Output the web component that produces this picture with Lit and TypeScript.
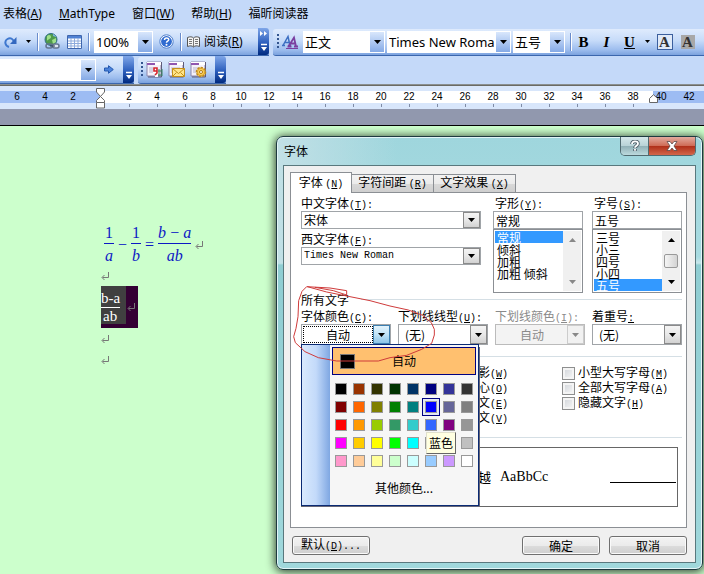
import { LitElement, html, css, svg } from "lit";
import { customElement, property } from "lit/decorators.js";
import { classMap } from "lit/directives/class-map.js";

const key = (k: string, tail = "") => html`<span class="k">(<u>${k}</u>)${tail}</span>`;

const caret = html`<svg class="caret" width="7" height="4" viewBox="0 0 7 4" aria-hidden="true"><path d="M0 0h7L3.5 4z" /></svg>`;

const returnMark = html`<svg class="ret" width="8" height="8" viewBox="0 0 8 8" aria-hidden="true">
  <path d="M7.5 0v5.500H1.500M3.500 3L1 5.500L3.500 8" fill="none" stroke="currentColor" />
</svg>`;

const base = css`
  :host, * { box-sizing: border-box; }
  button, select, input { font: inherit; color: inherit; margin: 0; padding: 0; border: 0; border-radius: 0; background: none; }
  select { appearance: none; outline: none; }
  svg { display: block; flex: none; }
`;

@customElement("word-toolbars")
class WordToolbars extends LitElement {
  static styles = [base, css`
    :host { display: block; background: #c4d9f9; color: #000; font: 12px/16px "Noto Sans", "Noto Sans CJK SC", sans-serif; }
    .menu { display: flex; gap: 17px; height: 28px; align-items: center; padding-left: 3px; }
    .menu button { white-space: nowrap; }
    .row { display: flex; gap: 4px; height: 28px; align-items: center; overflow: hidden; }
    .bar { display: flex; align-items: center; height: 27px; flex: none; background: linear-gradient(#dfebfd, #c6dbf9 45%, #9dbdee 80%, #7ba2de); border-bottom: 1px solid #3b66ad; }
    .b1 { width: 269px; }
    .b2 { flex: 1 0 430px; padding-left: 4px; border-radius: 3px 0 0 3px; }
    .b3 { width: 134px; }
    .b4 { width: 88px; padding-left: 3px; border-radius: 3px 0 0 3px; }
    .bar button { display: grid; place-items: center; width: 22px; height: 22px; flex: none; }
    .bar .mini { width: 12px; }
    .bar .read { display: flex; gap: 4px; width: auto; padding: 0 3px; align-items: center; white-space: nowrap; }
    .sep { width: 2px; height: 18px; margin: 0 2px 0 3px; background: linear-gradient(90deg, #6a8ccb 50%, #fff 50%); flex: none; }
    .b2 .sep { margin-right: 0; }
    .bar .cap { width: 11px; height: 27px; margin-left: auto; border-radius: 0 3px 3px 0; background: linear-gradient(#7fa6e8, #2d5fbd 55%, #002a80); color: #fff; align-content: end; padding-bottom: 3px; }
    .combo { display: grid; grid-template-columns: 1fr 14px; align-items: center; height: 22px; background: #fff; border: 1px solid #fff; flex: none; margin-right: 2px; font-size: 13px; }
    .combo select { grid-area: 1 / 1 / 2 / 3; height: 20px; width: 100%; padding: 0 15px 0 1px; text-overflow: clip; }
    .combo i { grid-area: 1 / 2; height: 20px; display: grid; place-items: center; background: linear-gradient(#d9e7fc, #85aae6); pointer-events: none; }
    .zoom { width: 59px; margin-left: 2px; }
    .style { width: 82px; margin-left: 2px; }
    .face { width: 124px; }
    .size { width: 52px; }
    .addr { width: 96px; }
    .grip { width: 2px; height: 15px; background: repeating-linear-gradient(#33558f 0 2px, transparent 2px 4px); flex: none; }
    .bar .fmt { width: 23px; font: bold 15px/16px "Liberation Serif", serif; }
    .boxed { width: 16px; border: 1px solid #3b5f9e; line-height: 14px; color: #333; background: #dfe9f8; }
    .shaded { width: 14px; background: #a8a8a8; color: #333; line-height: 14px; }
    .line { height: 2px; background: linear-gradient(#8a8f8f 50%, #6a6a64 50%); }
    .ruler { position: relative; height: 23px; padding-top: 5px; background: #d8e6fb; overflow: hidden; }
    .scale { display: flex; height: 12px; padding-left: 3px; background: linear-gradient(90deg, #9dbcf3 100px, #fff 100px 653px, #9dbcf3 653px); font: 10px/12px "Liberation Sans", sans-serif; }
    .scale span { flex: none; width: 28px; text-align: center; }
    .scale .tick::after { content: ""; display: block; width: 1px; height: 3px; margin: 1px auto 0; background: #7f8ba5; }
    .mark { position: absolute; top: 2px; left: 96px; }
    .right { position: absolute; top: 8px; left: 649px; }
  `];

  private combo(cls: string, label: string, value: string) {
    return html`<div class="combo ${cls}"><select aria-label=${label}><option>${value}</option></select><i>${caret}</i></div>`;
  }

  private cap(more = false) {
    return html`<button class="cap" aria-label="工具栏选项"><svg width="8" height="23" viewBox="0 0 8 23">
      ${more ? svg`<path d="M0 2l3 2.500l-3 2.500zM4 2l3 2.500l-3 2.500z" fill="#fff"/>` : ""}
      <path d="M1 15.500h6" stroke="#fff" stroke-width="1.500"/><path d="M1 18h6l-3 4z" fill="#fff"/></svg></button>`;
  }

  private mailIcon(kind: number) {
    return html`<svg width="17" height="17" viewBox="0 0 17 17">
      <path d="M1 1h14v14H1z" fill="#f4f1fa" stroke="#8c86ac"/><path d="M1 1h14v3H1z" fill="#fff"/><path d="M1 2h8v2H1z" fill="#9057b0"/>
      <path d="M3 7h9M3 9h9M3 11h6" stroke="#b9b4cc"/><path d="M15.500 1v15H2" fill="none" stroke="#5f5a78"/>
      ${kind === 0 ? svg`<path d="M7 6h5v10H9v-4H7z" fill="#fff"/><path d="M8 7h3v3H8zM11 7v5l-2 2" fill="none" stroke="#d3262f" stroke-width="1.600"/><path d="M13 8v7M16 8v7M12 10h4M12 14h4" stroke="#3c8262"/>` : ""}
      ${kind === 1 ? svg`<path d="M4.500 7.500h12v8h-12z" fill="#ffe58a" stroke="#c4901a"/><path d="M4.500 7.500l6 5l6-5M4.500 15.500l4-4M16.500 15.500l-4-4" fill="none" stroke="#c4901a"/>` : ""}
      ${kind === 2 ? svg`<circle cx="11" cy="11" r="4.500" fill="#ffd257" stroke="#c08a1c" stroke-width="1.500" stroke-dasharray="2.200 1.200"/><circle cx="11" cy="11" r="3.600" fill="#ffd257" stroke="#c08a1c" stroke-width=".6"/><circle cx="11" cy="11" r="1.500" fill="#fff" stroke="#b07a10"/>` : ""}
    </svg>`;
  }

  render() {
    const marks = [6, 4, 2, 0, ...Array.from({ length: 21 }, (_, i) => (i + 1) * 2)];
    return html`
      <nav class="menu">
        <button>表格(<u>A</u>)</button><button><u>M</u>athType</button><button>窗口(<u>W</u>)</button>
        <button>帮助(<u>H</u>)</button><button>福昕阅读器</button>
      </nav>
      <div class="row">
        <div class="bar b1">
          <button class="redo" aria-label="重复"><svg width="14" height="12" viewBox="0 0 14 12"><path d="M5 11C1 10 0 5 3.500 3S9 3.500 10 5.500" fill="none" stroke="#3f78cf" stroke-width="2"/><path d="M12.500 1v7H6z" fill="#3468bf"/></svg></button>
          <button class="mini" aria-label="重复列表"><svg width="5" height="3" viewBox="0 0 5 3"><path d="M0 0h5L2.500 3z"/></svg></button>
          <span class="sep"></span>
          <button aria-label="超链接"><svg width="16" height="17" viewBox="0 0 16 17"><circle cx="7" cy="6.500" r="6" fill="#4f9b4a" stroke="#2f6f86"/><path d="M3 3c2-2 4-1 4 1s-3 2-4 4zM8 7l4-2v4l-3 2z" fill="#9fe08a"/><path d="M9 1c2 1 3 2 3 3l-3-1z" fill="#79b3e2"/><g fill="none" stroke="#63758f" stroke-width="1.500"><rect x="2" y="11" width="6.500" height="4" rx="2"/><rect x="8.500" y="11" width="6.500" height="4" rx="2" fill="#dfe7f2"/></g><path d="M6 13h5" stroke="#2c3c55"/></svg></button>
          <button aria-label="插入表格"><svg width="15" height="14" viewBox="0 0 15 14"><path d="M.5.500h14v13H.5z" fill="#fff" stroke="#3f66ad"/><path d="M1 1h13v2.500H1z" fill="#4f81d4"/><path d="M4 3v10M7.500 3v10M11 3v10M1 6h13M1 8.500h13M1 11h13" stroke="#8eabdc"/></svg></button>
          <span class="sep"></span>
          ${this.combo("zoom", "显示比例", "100%")}
          <button aria-label="帮助"><svg width="15" height="15" viewBox="0 0 15 15"><circle cx="7.500" cy="7.500" r="6.700" fill="#fff" stroke="#4f7fcb"/><circle cx="7.500" cy="7.500" r="5.400" fill="#2f6bd0"/><path d="M5.500 6c0-2.800 4.200-2.600 4.200-.3c0 1.500-2.200 1.500-2.200 3" fill="none" stroke="#fff" stroke-width="1.500"/><circle cx="7.500" cy="10.800" r="1" fill="#fff"/></svg></button>
          <span class="sep"></span>
          <button class="read"><svg width="13" height="12" viewBox="0 0 13 12"><path d="M.5 1.500C3 .5 5 .5 6.500 2C8 .5 10 .5 12.500 1.500v9C10 9.500 8 9.500 6.500 11C5 9.500 3 9.500.5 10.500z" fill="#f5f5f5" stroke="#555"/><path d="M6.500 2v9M2 3.500h3M2 5.500h3M2 7.500h3M8 3.500h3M8 5.500h3M8 7.500h3" stroke="#777"/></svg><span>阅读(<u>R</u>)</span></button>
          ${this.cap(true)}
        </div>
        <div class="bar b2">
          <span class="grip"></span>
          <button aria-label="格式窗格"><svg width="16" height="15" viewBox="0 0 16 15"><g fill="none"><path d="M1 11.500L6 2.500L8 11.500M3 8.500h4.500M0 11.500h3M6 11.500h3" stroke="#3c6fc2" stroke-width="1.500"/><path d="M6.500 12.500L12 3.500L14 12.500M8.500 9.500h5M5.500 12.500h4M12 12.500h4" stroke="#7b3fa0" stroke-width="1.800"/><path d="M4 14.500h12" stroke="#7b3fa0"/></g></svg></button>
          ${this.combo("style", "样式", "正文")}${this.combo("face", "字体", "Times New Roman")}${this.combo("size", "字号", "五号")}
          <span class="sep"></span>
          <button class="fmt">B</button><button class="fmt"><i>I</i></button><button class="fmt"><u>U</u></button>
          <button class="mini" aria-label="下划线列表"><svg width="5" height="3" viewBox="0 0 5 3"><path d="M0 0h5L2.500 3z"/></svg></button>
          <button class="fmt"><span class="boxed">A</span></button><button class="fmt"><span class="shaded">A</span></button>
          <button aria-label="字符缩放"><svg width="14" height="14" viewBox="0 0 14 14"><path d="M2 3.500l3-3l3 3l-3 3z" fill="#2a67c8"/><path d="M3 13l9-9" stroke="#222" stroke-width="2"/></svg></button>
        </div>
      </div>
      <div class="row">
        <div class="bar b3">
          ${this.combo("addr", "地址", "")}
          <button aria-label="转到"><svg width="10" height="9" viewBox="0 0 10 9"><path d="M.5 3h4V.7L9.300 4.500L4.500 8.300V6h-4z" fill="#4b83dc" stroke="#2458ae"/></svg></button>
          ${this.cap()}
        </div>
        <div class="bar b4">
          <span class="grip"></span>
          <button aria-label="文档">${this.mailIcon(0)}</button><button aria-label="邮件">${this.mailIcon(1)}</button><button aria-label="设置">${this.mailIcon(2)}</button>
          ${this.cap()}
        </div>
      </div>
      <div class="line"></div>
      <div class="ruler">
        <div class="scale">${marks.map((n, i) => html`<span class=${classMap({ tick: i > 3 && n < 40 })}>${n || ""}</span>`)}</div>
        <svg class="mark" width="9" height="21" viewBox="0 0 9 21"><g fill="#fff" stroke="#666"><path d="M.5.500h8v3.500L4.500 8.500L.5 4z"/><path d="M4.500 8.500L8.500 12.500v2h-8v-2z"/><path d="M.5 14.500h8v5.500h-8z"/></g></svg>
        <svg class="right" width="9" height="9" viewBox="0 0 9 9"><path d="M4.500.7L8.500 4.500v4h-8v-4z" fill="#fff" stroke="#666"/></svg>
      </div>`;
  }
}

@customElement("math-page")
class MathPage extends LitElement {
  static styles = [base, css`
    :host { display: block; padding: 98px 0 0 101px; font: 16px/18px "Liberation Serif", serif; }
    .eq { display: flex; align-items: center; gap: 4px; padding-left: 3px; height: 41px; color: #0d18c4; }
    .f { display: grid; justify-items: center; font-style: italic; }
    .f b { font-weight: normal; }
    .f b:first-child { border-bottom: 1px solid currentColor; width: 100%; text-align: center; height: 20px; }
    .f b:last-child { padding-top: 3px; }
    .f .n { font-style: normal; padding: 0 1px; }
    .ret { color: #777; }
    .para { display: flex; align-items: center; height: 21px; }
    .sel { display: flex; align-items: center; width: 37px; height: 42px; background: #303; }
    .box { display: grid; justify-items: start; align-self: start; width: 25px; height: 38px; padding-top: 4px; background: #404040; color: #fff; font-size: 15px; line-height: 17px; margin-right: 1px; }
    .box b { font-weight: normal; }
    .box b:first-child { border-bottom: 1px solid #fff; height: 18px; }
    .box b:last-child { padding-left: 2px; line-height: 15px; }
  `];
  render() {
    return html`
      <div class="eq">
        <span class="f"><b class="n">1</b><b>a</b></span><span>−</span>
        <span class="f"><b class="n">1</b><b>b</b></span><span>=</span>
        <span class="f"><b>b&thinsp;−&thinsp;a</b><b>ab</b></span>${returnMark}
      </div>
      <div class="para">${returnMark}</div>
      <div class="sel"><span class="box"><b>b-a</b><b>ab</b></span>${returnMark}</div>
      <div class="para">${returnMark}</div>
      <div class="para">${returnMark}</div>`;
  }
}

const COLORS = [
  ["#000000", "#993300", "#333300", "#003300", "#003366", "#000080", "#333399", "#333333"],
  ["#800000", "#ff6600", "#808000", "#008000", "#008080", "#0000ff", "#666699", "#808080"],
  ["#ff0000", "#ff9900", "#99cc00", "#339966", "#33cccc", "#3366ff", "#800080", "#969696"],
  ["#ff00ff", "#ffcc00", "#ffff00", "#00ff00", "#00ffff", "#00ccff", "#993366", "#c0c0c0"],
  ["#ff99cc", "#ffcc99", "#ffff99", "#ccffcc", "#ccffff", "#99ccff", "#cc99ff", "#ffffff"],
];

@customElement("color-menu")
class ColorMenu extends LitElement {
  @property() selected = "#0000ff";
  static styles = [base, css`
    :host { display: block; width: 178px; padding: 2px 2px 1px 28px; border: 1px solid #0a2a74; font: 12px/16px "Noto Sans CJK SC", sans-serif; background: linear-gradient(90deg, #d9e9fd, #c3dafa 14px, #7fa7e2 28px, #f6f6f6 28px); box-shadow: 2px 2px 0 -1px #667; }
    .auto { display: grid; grid-template-columns: 15px 1fr 15px; align-items: center; width: 144px; height: 28px; margin-left: 2px; padding: 0 7px; border: 1px solid #000080; background: #ffc06f; }
    .auto i { height: 15px; background: #000; border: 1px solid #777; }
    .grid { display: grid; grid-template-columns: repeat(8, 18px); grid-auto-rows: 18px; margin: 5px 0 0 2px; }
    .grid button { position: relative; display: grid; place-items: center; border: 1px solid transparent; }
    .grid .on { border-color: #000080; background: #e4e8f4; }
    .grid i { width: 12px; height: 12px; border: 1px solid #999; }
    .tip { position: absolute; z-index: 1; left: 3px; top: 33px; width: 30px; height: 22px; line-height: 19px; border: 1px solid #e0e0cc; border-right-color: #666; border-bottom-color: #666; background: #ffffe1; white-space: nowrap; text-align: center; }
    .more { display: block; width: 144px; height: 32px; margin: 2px 0 0 2px; }
  `];
  render() {
    return html`
      <button class="auto"><i></i><span>自动</span></button>
      <div class="grid">${COLORS.flat().map((c) => html`
        <button class=${classMap({ on: c === this.selected })} aria-label=${c}><i style="background:${c}"></i>${c === this.selected ? html`<span class="tip" role="tooltip">蓝色</span>` : ""}</button>`)}</div>
      <button class="more">其他颜色...</button>`;
  }
}

@customElement("font-dialog")
class FontDialog extends LitElement {
  static styles = [base, css`
    :host { display: block; width: 427px; padding: 0 6px 6px; border: 1px solid #1e3a40; border-radius: 7px; color: #000; font: 12px/14px "Noto Sans CJK SC", sans-serif;
      background: linear-gradient(90deg, #c2e0e6 0, transparent 120px) top / 100% 126px no-repeat, linear-gradient(#9fd6dd, #a8dbe1 120px, #c8e6ea 126px, #8fcdd2 128px, #a0d8dc);
      box-shadow: inset 0 0 0 1px #e2f5f7, 0 1px 10px 1px rgba(0, 0, 0, .75); }
    .k { font: 10px/14px "Liberation Mono", monospace; }
    .title { display: flex; align-items: center; height: 28px; }
    .title h1 { flex: 1; margin: 0; padding-left: 1px; font: inherit; }
    .win { display: flex; align-self: start; height: 19px; border: 1px solid #506a70; border-top: 0; border-radius: 0 0 5px 5px; overflow: hidden; }
    .win button { display: grid; place-items: center; width: 27px; background: linear-gradient(#d5e8ea, #b9d3d7 48%, #91b1b7 52%, #bcdade); }
    .win .x { width: 47px; border-left: 1px solid #506a70; background: linear-gradient(#e3aa9e, #cf6c57 48%, #b0301a 52%, #d3664a); }
    .client { padding: 6px 8px 7px 6px; border: 1px solid #59787d; background: #f0f0f0; }
    .tabs { display: flex; align-items: end; height: 20px; }
    .tabs button { width: 82px; height: 18px; border: 1px solid #8b8f94; border-left-width: 0; border-bottom: 0; background: linear-gradient(#f3f3f3, #ebebeb 50%, #d8d8d8 55%, #cfcfcf); }
    .tabs .on { width: 62px; height: 21px; margin-bottom: -1px; border-left-width: 1px; background: #fff; }
    .pane { padding: 0 4px 20px 10px; border: 1px solid #8b8f94; background: #fff; }
    .top { display: grid; grid-template-columns: 1fr 90px 90px; column-gap: 9px; }
    .top > :first-child { margin-right: 3px; }
    .four { display: grid; grid-template-columns: repeat(4, 90px); justify-content: space-between; }
    label, .field { display: block; position: relative; }
    .cap { display: block; height: 18px; line-height: 19px; white-space: nowrap; }
    .top > :not(:first-child) .cap { padding-left: 2px; }
    .drop { display: grid; grid-template-columns: 1fr 17px; align-items: center; height: 18px; border: 1px solid #a0a4a8; background: #fff; }
    .drop select { grid-area: 1 / 1 / 2 / 3; width: 100%; height: 100%; padding: 0 19px 0 2px; }
    .drop i { grid-area: 1 / 2; display: grid; place-items: center; align-self: stretch; border: 1px solid #8a8a8a; background: linear-gradient(#f4f4f4, #e8e8e8 50%, #d2d2d2); pointer-events: none; }
    .four .drop { height: 21px; }
    .mono select { font: 10px/14px "Liberation Mono", monospace; }
    .mid select { padding-left: 24px; }
    .none select { padding-left: 6px; }
    .hot select { outline: 1px dotted #000; outline-offset: -2px; padding-left: 24px; width: calc(100% - 16px); }
    .hot i { background: linear-gradient(#e3f3fc, #bfe3f8 50%, #8cc5e8); border-color: #3c7fb1; }
    .off { color: #8a8a8a; }
    .off .drop { background: #f3f3f3; border-color: #bbb; }
    .off select { opacity: 1; color: #8a8a8a; }
    .off i { border-color: #ccc; background: #f1f1f1; }
    .off .caret, .dim .caret { fill: #888; }
    .text { display: block; width: 100%; height: 18px; padding: 0 2px; border: 1px solid #a0a4a8; }
    .list { display: grid; grid-template-columns: 1fr 18px; height: 64px; padding: 1px; border: 1px solid #8b8f94; background: #fff; }
    .list select { overflow: hidden; height: 60px; outline: none; scrollbar-width: none; }
    .list option { display: grid; align-content: center; height: 12px; min-height: 12px; line-height: 12px; padding: 0 2px; }
    .list option:checked { color: #fff; background: #3399ff linear-gradient(#3399ff, #3399ff); }
    .scroll { display: flex; flex-direction: column; justify-content: space-between; align-items: center; padding: 7px 0; background: #f0f0f0; }
    .scroll .thumb { width: 14px; height: 14px; border: 1px solid #999; border-radius: 2px; background: linear-gradient(90deg, #f5f5f5, #d3d3d3); }
    .up { transform: rotate(180deg); }
    .legend { display: flex; align-items: center; gap: 12px; height: 13px; }
    .legend::after { content: ""; flex: 1; height: 1px; background: #d5dfe5; }
    .rule { height: 1px; margin: 11px 0 9px; background: #d5dfe5; }
    .checks { display: grid; grid-template: repeat(4, 15px) / 112px auto; grid-auto-flow: column; padding-left: 149px; }
    .checks label { display: flex; align-items: center; gap: 3px; white-space: nowrap; }
    .checks input { appearance: none; width: 13px; height: 13px; border: 1px solid #8e8f8f; background: linear-gradient(135deg, #cfd3d8, #f8f8f8); box-shadow: inset 0 0 0 2px #f4f4f4; }
    .preview { display: flex; align-items: center; gap: 9px; height: 60px; margin-right: 4px; padding: 0 1px 0 133px; border: 1px solid #666; font-size: 14px; }
    .latin { font-family: "Liberation Serif", serif; }
    .preview::after { content: ""; width: 66px; height: 1px; margin: 10px 0 0 auto; background: #000; }
    .foot { display: flex; gap: 9px; padding: 8px 0 0 2px; }
    .foot button { width: 78px; height: 19px; border: 1px solid #707070; border-radius: 3px; background: linear-gradient(#f3f3f3, #ebebeb 50%, #dcdcdc 52%, #cfcfcf); box-shadow: inset 0 0 0 1px #fafafa; }
    .foot button:first-child { margin-right: auto; }
    color-menu { position: absolute; z-index: 2; left: 0; top: 38px; }
    .ink { position: absolute; z-index: 3; left: 13px; top: 143px; pointer-events: none; }
  `];

  private drop(cls: string, value: string, disabled = false) {
    return html`<span class="drop ${cls}"><select ?disabled=${disabled}><option>${value}</option></select><i>${caret}</i></span>`;
  }

  private list(label: string, items: string[], sel: string, thumb: boolean) {
    return html`<div class="list"><select size="5" aria-label=${label}>${items.map((o) => html`<option ?selected=${o === sel}>${o}</option>`)}</select>
      <div class=${classMap({ scroll: true, dim: !thumb })}><span class="up">${caret}</span>${thumb ? html`<span class="thumb"></span>` : ""}${caret}</div></div>`;
  }

  render() {
    const checks = [["阴影", "W"], ["空心", "O"], ["阳文", "E"], ["阴文", "V"], ["小型大写字母", "M"], ["全部大写字母", "A"], ["隐藏文字", "H"]];
    return html`
      <header class="title"><h1>字体</h1>
        <div class="win">
          <button aria-label="帮助"><svg width="10" height="12" viewBox="0 0 10 12"><g fill="none" stroke="#4c5e68" stroke-width="3.600"><path d="M2 4c0-3.600 6-3.200 6-.3c0 2-3 2-3 4.300M5 9v2"/></g><g fill="none" stroke="#fff" stroke-width="1.800"><path d="M2 4c0-3.600 6-3.200 6-.3c0 2-3 2-3 4M5 9v1.700"/></g></svg></button>
          <button class="x" aria-label="关闭"><svg width="12" height="10" viewBox="0 0 12 10"><path d="M1 .5h3l2 2.500l2-2.500h3L8 5l3 4.500H8L6 7L4 9.500H1L4 5z" fill="#fff" stroke="#5c4a4a" stroke-width=".8"/></svg></button>
        </div>
      </header>
      <div class="client">
        <div class="tabs" role="tablist">
          <button class="on" role="tab" aria-selected="true">字体 ${key("N")}</button><button role="tab">字符间距 ${key("R")}</button><button role="tab">文字效果 ${key("X")}</button>
        </div>
        <section class="pane">
          <div class="top">
            <div>
              <label><span class="cap">中文字体${key("T", ":")}</span>${this.drop("", "宋体")}</label>
              <label><span class="cap">西文字体${key("F", ":")}</span>${this.drop("mono", "Times New Roman")}</label>
            </div>
            <div>
              <label><span class="cap">字形${key("Y", ":")}</span><input class="text" value="常规" /></label>
              ${this.list("字形", ["常规", "倾斜", "加粗", "加粗 倾斜"], "常规", false)}
            </div>
            <div>
              <label><span class="cap">字号${key("S", ":")}</span><input class="text" value="五号" /></label>
              ${this.list("字号", ["三号", "小三", "四号", "小四", "五号"], "五号", true)}
            </div>
          </div>
          <div class="legend">所有文字</div>
          <div class="four">
            <div class="field"><label><span class="cap">字体颜色${key("C", ":")}</span>${this.drop("hot", "自动")}</label><color-menu></color-menu></div>
            <label><span class="cap">下划线线型${key("U", ":")}</span>${this.drop("none", "(无)")}</label>
            <label class="off"><span class="cap">下划线颜色${key("I", ":")}</span>${this.drop("mid", "自动", true)}</label>
            <label><span class="cap">着重号<u class="k">:</u></span>${this.drop("none", "(无)")}</label>
          </div>
          <div class="rule"></div>
          <div class="checks">${checks.map(([t, k]) => html`<label><input type="checkbox" /><span>${t}${key(k)}</span></label>`)}</div>
          <div class="rule"></div>
          <div class="preview"><span>微软卓越</span><span class="latin">AaBbCc</span></div>
        </section>
        <footer class="foot"><button>默认${key("D", "...")}</button><button>确定</button><button>取消</button></footer>
      </div>
      <svg class="ink" width="210" height="130" viewBox="0 0 630 390" aria-hidden="true">
        <path d="M75 22L130 32L170 45V32L120 24L50 20L36 34L26 62L24 110L18 145L11 170L16 188L45 215L85 233L140 243H265L300 233L350 226L395 208L425 190L433 165V148L424 128L398 106L355 90L300 78L240 62L170 48L110 36L52 20" fill="none" stroke="#cf3b3b" stroke-width="3" />
      </svg>`;
  }
}

@customElement("app-root")
class AppRoot extends LitElement {
  static styles = css`
    :host { display: flex; flex-direction: column; position: relative; min-height: 100vh; overflow: hidden; background: #cfc; }
    .gap { height: 16px; background: #9198ae; border-bottom: 1px solid #000; }
    math-page { flex: 1; }
    font-dialog { position: absolute; left: 276px; top: 136px; }
  `;
  render() {
    return html`<word-toolbars></word-toolbars><div class="gap"></div><math-page></math-page><font-dialog></font-dialog>`;
  }
}
